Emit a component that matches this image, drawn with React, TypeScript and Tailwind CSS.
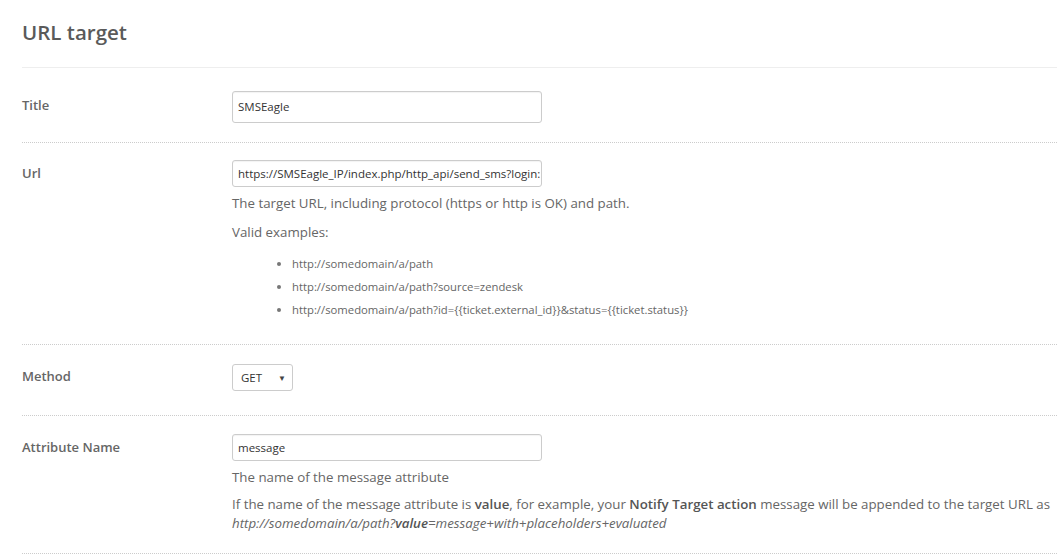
import React from "react";

const examples = [
  "http://somedomain/a/path",
  "http://somedomain/a/path?source=zendesk",
  "http://somedomain/a/path?id={{ticket.external_id}}&status={{ticket.status}}",
];

function Label({ children }: { children: React.ReactNode }) {
  return (
    <div className="w-[210px] shrink-0 text-[13px] font-semibold text-[#666]">
      {children}
    </div>
  );
}

function TextBox({ value, tall }: { value: string; tall?: boolean }) {
  return (
    <div
      className={
        "w-[310px] overflow-hidden whitespace-nowrap rounded-[3px] border border-[#ccc] bg-white px-[5px] text-[11.5px] text-[#333] shadow-[inset_0_1px_1px_rgba(0,0,0,0.05)] flex items-center " +
        (tall ? "h-[32px]" : "h-[27px]")
      }
    >
      {value}
    </div>
  );
}

export default function App() {
  return (
    <div
      className="min-h-screen bg-white pl-[22px] text-[#555]"
      style={{ fontFamily: '"Open Sans", "Liberation Sans", sans-serif' }}
    >
      <div className="flex h-[68px] items-center border-b border-[#eee]">
        <h2 className="text-[20.5px] font-semibold text-[#5a5a5a] pb-[2px]">URL target</h2>
      </div>

      {/* Title */}
      <div className="flex items-start border-b border-dotted border-[#ccc] pt-[23px] pb-[19px]">
        <div className="pt-[5px]">
          <Label>Title</Label>
        </div>
        <TextBox value="SMSEagle" tall />
      </div>

      {/* Url */}
      <div className="flex items-start border-b border-dotted border-[#ccc] pt-[17px] pb-[24px]">
        <div className="pt-[4px]">
          <Label>Url</Label>
        </div>
        <div className="flex flex-col">
          <TextBox value="https://SMSEagle_IP/index.php/http_api/send_sms?login:" />
          <p className="mt-[6px] text-[13.3px] leading-[20px] text-[#666]">
            The target URL, including protocol (https or http is OK) and path.
          </p>
          <p className="mt-[9px] text-[13.3px] leading-[20px] text-[#666]">Valid examples:</p>
          <ul className="mt-[12px] flex flex-col gap-[3px] pl-[45px]">
            {examples.map((e) => (
              <li key={e} className="flex items-center text-[11.3px] leading-[20px] text-[#666]">
                <span className="mr-[11px] inline-block h-[4px] w-[4px] rounded-full bg-[#777]" />
                {e}
              </li>
            ))}
          </ul>
        </div>
      </div>

      {/* Method */}
      <div className="flex items-start border-b border-dotted border-[#ccc] pt-[19px] pb-[24px]">
        <div className="pt-[3px]">
          <Label>Method</Label>
        </div>
        <div className="flex h-[27px] w-[61px] items-center justify-between rounded-[3px] border border-[#ccc] bg-white pl-[8px] pr-[6px] text-[11.5px] text-[#333]">
          <span>GET</span>
          <span className="text-[8px] text-[#444]">▼</span>
        </div>
      </div>

      {/* Attribute Name */}
      <div className="flex items-start border-b border-dotted border-[#ccc] pt-[18px] pb-[20px]">
        <div className="pt-[4px]">
          <Label>Attribute Name</Label>
        </div>
        <div className="flex flex-col">
          <TextBox value="message" />
          <p className="mt-[6px] text-[13.3px] leading-[20px] text-[#666]">
            The name of the message attribute
          </p>
          <p className="mt-[8px] whitespace-nowrap text-[13.3px] leading-[19px] text-[#666]">
            If the name of the message attribute is <b className="font-semibold text-[#555]">value</b>, for
            example, your <b className="font-semibold text-[#555]">Notify Target action</b> message will be
            appended to the target URL as
            <br />
            <i>
              http://somedomain/a/path?<b className="font-semibold text-[#555]">value</b>
              =message+with+placeholders+evaluated
            </i>
          </p>
        </div>
      </div>
    </div>
  );
}
